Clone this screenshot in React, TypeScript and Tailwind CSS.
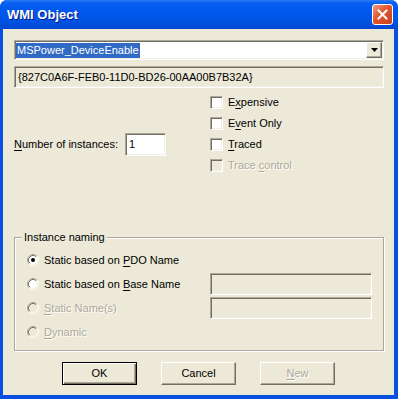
import React from "react";

const U = ({ children }: { children: React.ReactNode }) => (
  <span className="underline underline-offset-[2px]">{children}</span>
);

const sunken =
  "border border-t-[#aca899] border-l-[#aca899] border-b-white border-r-white shadow-[inset_1px_1px_0_#716f64,inset_-1px_-1px_0_#f1efe2]";

const disabledText = "text-[#aca899] [text-shadow:1px_1px_0_#fff]";

const Checkbox = ({ label, disabled }: { label: React.ReactNode; disabled?: boolean }) => (
  <div className="flex h-[21px] items-center gap-[5px]">
    <div className={`h-[13px] w-[13px] ${sunken} ${disabled ? "bg-[#ece9d8]" : "bg-white"}`} />
    <span className={disabled ? disabledText : ""}>{label}</span>
  </div>
);

const Radio = ({ checked, disabled }: { checked?: boolean; disabled?: boolean }) => (
  <svg width="12" height="12" viewBox="0 0 12 12" className="shrink-0">
    <circle cx="6" cy="6" r="5" fill={disabled ? "#ece9d8" : "#fff"} />
    <path d="M2.11 9.89 A5.5 5.5 0 0 1 9.89 2.11" fill="none" stroke="#aca899" />
    <path d="M2.82 9.18 A4.5 4.5 0 0 1 9.18 2.82" fill="none" stroke="#716f64" />
    <path d="M9.89 2.11 A5.5 5.5 0 0 1 2.11 9.89" fill="none" stroke="#fff" />
    <path d="M9.18 2.82 A4.5 4.5 0 0 1 2.82 9.18" fill="none" stroke="#f1efe2" />
    {checked && <circle cx="6" cy="6" r="2" fill="#000" />}
  </svg>
);

const RadioRow = ({
  label,
  checked,
  disabled,
  field,
}: {
  label: React.ReactNode;
  checked?: boolean;
  disabled?: boolean;
  field?: boolean;
}) => (
  <div className="flex h-[24px] items-center">
    <div className="flex w-[183px] items-center gap-[5px]">
      <Radio checked={checked} disabled={disabled} />
      <span className={disabled ? disabledText : ""}>{label}</span>
    </div>
    {field && <div className={`h-[22px] w-[162px] bg-[#ece9d8] ${sunken}`} />}
  </div>
);

const Button = ({ children, isDefault, disabled }: { children: React.ReactNode; isDefault?: boolean; disabled?: boolean }) => (
  <button
    className={`flex h-[23px] w-[75px] items-center justify-center bg-[#ece9d8] ${
      isDefault
        ? "border border-black shadow-[inset_1px_1px_0_#fff,inset_-1px_-1px_0_#716f64,inset_-2px_-2px_0_#aca899]"
        : "border border-t-white border-l-white border-b-[#716f64] border-r-[#716f64] shadow-[inset_-1px_-1px_0_#aca899]"
    } ${disabled ? disabledText : "text-black"}`}
  >
    {children}
  </button>
);

export default function App() {
  return (
    <div className="h-[399px] w-[398px] bg-white font-['Liberation_Sans',Arial,sans-serif] text-[11px] leading-[13px] text-black">
      <div className="flex h-full flex-col overflow-hidden rounded-t-[7px] bg-[#0a4fe0]">
        {/* Title bar */}
        <div className="flex h-[29px] shrink-0 items-center justify-between bg-[linear-gradient(to_bottom,#2a7cf7_0px,#0a5fee_3px,#0058ee_10px,#0055e5_20px,#0046d0_29px)] pl-[7px] pr-[5px]">
          <span className="font-['Liberation_Sans',Arial,sans-serif] text-[13px] font-bold text-white [text-shadow:1px_1px_0_#0a1883]">
            WMI Object
          </span>
          <div className="flex h-[21px] w-[21px] items-center justify-center rounded-[3px] border border-white bg-[linear-gradient(135deg,#f09a7c_0%,#e2552d_45%,#c8401c_100%)]">
            <svg width="11" height="11" viewBox="0 0 11 11">
              <path d="M1.5 1.5 L9.5 9.5 M9.5 1.5 L1.5 9.5" stroke="#fff" strokeWidth="2" strokeLinecap="square" />
            </svg>
          </div>
        </div>

        {/* Client area */}
        <div className="mb-[4px] ml-[3px] mr-[4px] flex flex-1 flex-col bg-[#ece9d8] pl-[11px] pr-[10px]">
          {/* Combo box */}
          <div className={`mt-[11px] flex h-[20px] items-center bg-white ${sunken}`}>
            <div className="flex flex-1 items-center pl-[1px]">
              <span className="bg-[#316ac5] px-[1px] leading-[15px] text-white">MSPower_DeviceEnable</span>
            </div>
            <div className="mr-[1px] flex h-[16px] w-[16px] items-center justify-center border border-t-white border-l-white border-b-[#716f64] border-r-[#716f64] bg-[#ece9d8] shadow-[inset_-1px_-1px_0_#aca899]">
              <svg width="7" height="4" viewBox="0 0 7 4">
                <path d="M0 0 H7 L3.5 4 Z" fill="#000" />
              </svg>
            </div>
          </div>

          {/* GUID */}
          <div className={`mt-[6px] flex h-[22px] items-center bg-[#ece9d8] pl-[3px] ${sunken}`}>
            {"{827C0A6F-FEB0-11D0-BD26-00AA00B7B32A}"}
          </div>

          {/* Middle section */}
          <div className="flex h-[149px]">
            <div className="flex w-[196px] items-start pt-[45px]">
              <div className="flex h-[23px] items-center">
                <span className="w-[111px]">
                  <U>N</U>umber of instances:
                </span>
                <div className={`h-[23px] w-[41px] bg-white pl-[3px] pt-[4px] ${sunken}`}>1</div>
              </div>
            </div>
            <div className="flex flex-col pt-[4px]">
              <Checkbox label={<>E<U>x</U>pensive</>} />
              <Checkbox label={<>E<U>v</U>ent Only</>} />
              <Checkbox label={<><U>T</U>raced</>} />
              <Checkbox label={<>Trace <U>c</U>ontrol</>} disabled />
            </div>
          </div>

          {/* Group box */}
          <div className="relative h-[114px] border border-[#aca899] shadow-[inset_1px_1px_0_#fff,1px_1px_0_#fff] pl-[12px] pt-[10px]">
            <span className="absolute -top-[7px] left-[7px] bg-[#ece9d8] px-[2px]">Instance naming</span>
            <RadioRow label={<>Static based on <U>P</U>DO Name</>} checked />
            <RadioRow label={<>Static based on <U>B</U>ase Name</>} field />
            <RadioRow label={<><U>S</U>tatic Name(s)</>} disabled field />
            <RadioRow label={<><U>D</U>ynamic</>} disabled />
          </div>

          {/* Buttons */}
          <div className="mt-[11px] flex justify-center gap-[24px] pr-[1px]">
            <Button isDefault>OK</Button>
            <Button>Cancel</Button>
            <Button disabled>
              <U>N</U>ew
            </Button>
          </div>
        </div>
      </div>
    </div>
  );
}
